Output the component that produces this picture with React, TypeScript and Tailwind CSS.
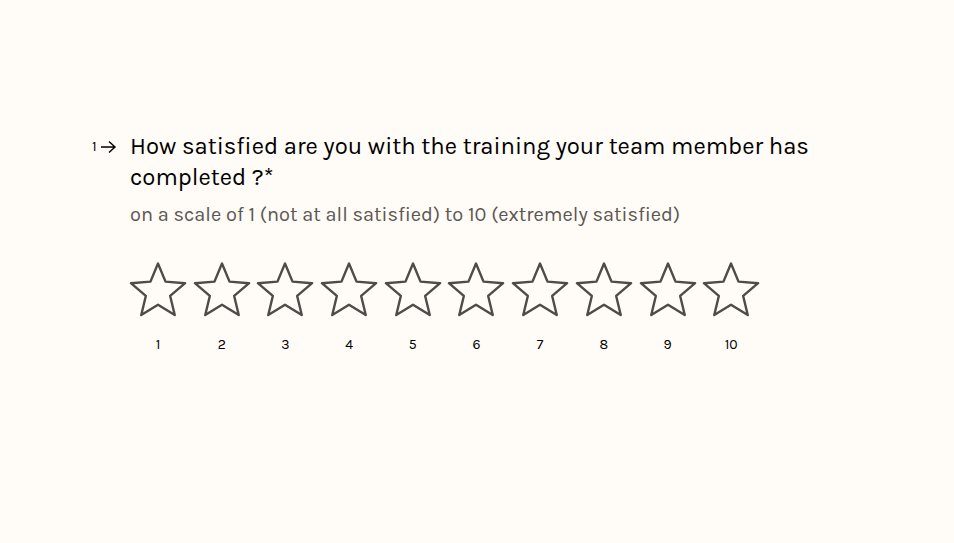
import React from "react";

const starPoints = (() => {
  const cx = 29;
  const cy = 31;
  const R = 28.5;
  const r = 12.8;
  const pts: string[] = [];
  for (let i = 0; i < 10; i++) {
    const rad = i % 2 === 0 ? R : r;
    const a = (Math.PI / 5) * i - Math.PI / 2;
    pts.push(`${(cx + rad * Math.cos(a)).toFixed(2)},${(cy + rad * Math.sin(a)).toFixed(2)}`);
  }
  return pts.join(" ");
})();

const Star = () => (
  <svg width="58" height="58" viewBox="0 0 58 58" fill="none">
    <polygon
      points={starPoints}
      stroke="#4f4b48"
      strokeWidth="2.4"
      strokeLinejoin="round"
    />
  </svg>
);

const App = () => {
  const ratings = [1, 2, 3, 4, 5, 6, 7, 8, 9, 10];

  return (
    <div
      className="min-h-[543px] w-full bg-[#fffbf6] text-black"
      style={{ fontFamily: "Karla, 'Noto Sans', sans-serif" }}
    >
      <div className="flex pt-[131px] pl-[92px]">
        {/* question number */}
        <div className="flex h-[31px] w-[38px] items-center gap-[3px] text-[14px] leading-none">
          <span>1</span>
          <svg width="17" height="16" viewBox="0 0 17 16" fill="none" stroke="black" strokeWidth="1.4">
            <path d="M1 8h14M9 2.5l6 5.5-6 5.5" />
          </svg>
        </div>

        <div className="flex flex-col">
          <h1 className="w-[720px] text-[23.9px] leading-[31px]">
            How satisfied are you with the training your team member has completed ?*
          </h1>
          <p className="mt-[8px] text-[20px] leading-[28px] text-[#5b5753]">
            on a scale of 1 (not at all satisfied) to 10 (extremely satisfied)
          </p>

          <div className="mt-[32px] -ml-[1px] flex gap-[5.7px]">
            {ratings.map((n) => (
              <div key={n} className="flex w-[58px] flex-col items-center">
                <Star />
                <span className="mt-[19px] text-[14px] leading-none">{n}</span>
              </div>
            ))}
          </div>
        </div>
      </div>
    </div>
  );
};

export default App;
